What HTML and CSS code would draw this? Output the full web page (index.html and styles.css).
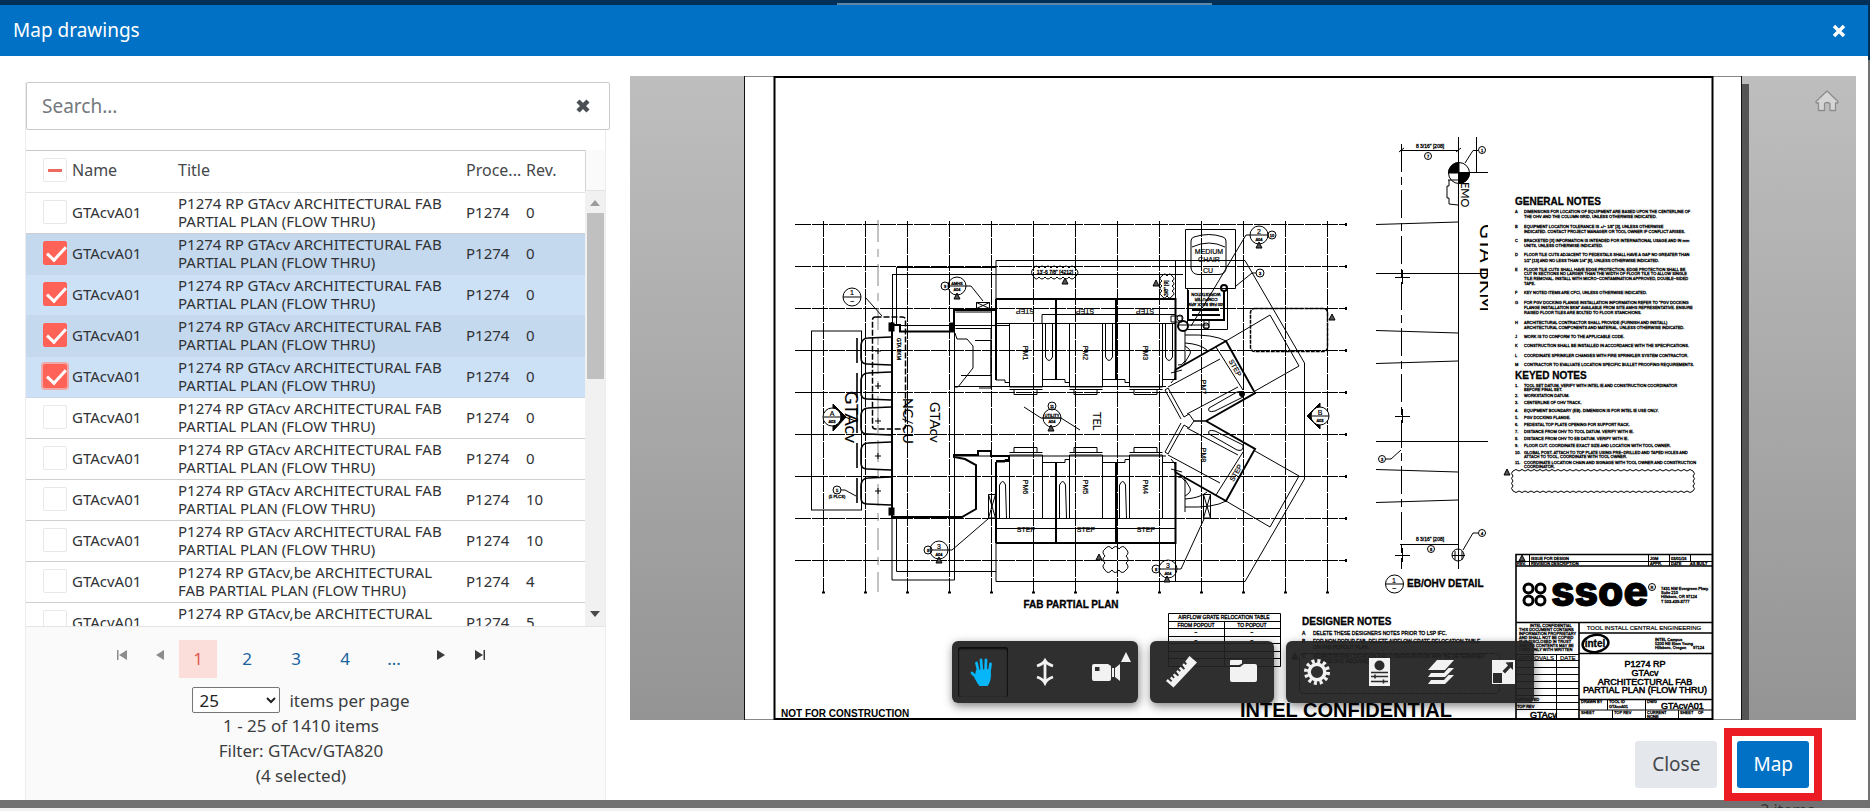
FILE: index.html
```html
<!DOCTYPE html>
<html lang="en">
<head>
<meta charset="utf-8">
<title>Map drawings</title>
<link rel="stylesheet" href="styles.css">
</head>
<body>
<div class="topbar"><div class="topbar-tab"></div></div>
<main class="dialog" role="dialog" aria-labelledby="dialog-title">
  <header class="dialog-header">
    <h1 id="dialog-title" class="dialog-title">Map drawings</h1>
    <button class="icon-button" type="button" aria-label="Close dialog">
      <svg width="14" height="14" viewBox="0 0 14 14"><path d="M2 2 12 12M12 2 2 12" stroke="#fff" stroke-width="3.4"/></svg>
    </button>
  </header>
  <div class="dialog-body">
    <section class="panel">
      <div class="search">
        <input class="search-input" type="text" placeholder="Search..." aria-label="Search">
        <button class="icon-button" type="button" aria-label="Clear search">
          <svg width="16" height="16" viewBox="0 0 16 16"><path d="M3 3 13 13M13 3 3 13" stroke="#4c5054" stroke-width="4.4"/></svg>
        </button>
      </div>
      <div class="grid">
        <div class="grid-view">
          <table class="drawings">
            <thead>
              <tr><th class="col-check"><input class="check mixed" type="checkbox" aria-label="Select all"></th><th class="col-name">Name</th><th class="col-title">Title</th><th class="col-process">Proce...</th><th>Rev.</th></tr>
            </thead>
            <tbody>
              <tr><td><input class="check" type="checkbox" aria-label="Select row 1"></td><td>GTAcvA01</td><td class="title">P1274 RP GTAcv ARCHITECTURAL FAB PARTIAL PLAN (FLOW THRU)</td><td>P1274</td><td>0</td></tr>
              <tr class="selected alt"><td><input class="check" type="checkbox" checked aria-label="Select row 2"></td><td>GTAcvA01</td><td class="title">P1274 RP GTAcv ARCHITECTURAL FAB PARTIAL PLAN (FLOW THRU)</td><td>P1274</td><td>0</td></tr>
              <tr class="selected"><td><input class="check" type="checkbox" checked aria-label="Select row 3"></td><td>GTAcvA01</td><td class="title">P1274 RP GTAcv ARCHITECTURAL FAB PARTIAL PLAN (FLOW THRU)</td><td>P1274</td><td>0</td></tr>
              <tr class="selected alt"><td><input class="check" type="checkbox" checked aria-label="Select row 4"></td><td>GTAcvA01</td><td class="title">P1274 RP GTAcv ARCHITECTURAL FAB PARTIAL PLAN (FLOW THRU)</td><td>P1274</td><td>0</td></tr>
              <tr class="selected"><td><input class="check focused" type="checkbox" checked aria-label="Select row 5"></td><td>GTAcvA01</td><td class="title">P1274 RP GTAcv ARCHITECTURAL FAB PARTIAL PLAN (FLOW THRU)</td><td>P1274</td><td>0</td></tr>
              <tr><td><input class="check" type="checkbox" aria-label="Select row 6"></td><td>GTAcvA01</td><td class="title">P1274 RP GTAcv ARCHITECTURAL FAB PARTIAL PLAN (FLOW THRU)</td><td>P1274</td><td>0</td></tr>
              <tr><td><input class="check" type="checkbox" aria-label="Select row 7"></td><td>GTAcvA01</td><td class="title">P1274 RP GTAcv ARCHITECTURAL FAB PARTIAL PLAN (FLOW THRU)</td><td>P1274</td><td>0</td></tr>
              <tr><td><input class="check" type="checkbox" aria-label="Select row 8"></td><td>GTAcvA01</td><td class="title">P1274 RP GTAcv ARCHITECTURAL FAB PARTIAL PLAN (FLOW THRU)</td><td>P1274</td><td>10</td></tr>
              <tr><td><input class="check" type="checkbox" aria-label="Select row 9"></td><td>GTAcvA01</td><td class="title">P1274 RP GTAcv ARCHITECTURAL FAB PARTIAL PLAN (FLOW THRU)</td><td>P1274</td><td>10</td></tr>
              <tr><td><input class="check" type="checkbox" aria-label="Select row 10"></td><td>GTAcvA01</td><td class="title">P1274 RP GTAcv,be ARCHITECTURAL FAB PARTIAL PLAN (FLOW THRU)</td><td>P1274</td><td>4</td></tr>
              <tr><td><input class="check" type="checkbox" aria-label="Select row 11"></td><td>GTAcvA01</td><td class="title">P1274 RP GTAcv,be ARCHITECTURAL FAB PARTIAL PLAN (FLOW THRU)</td><td>P1274</td><td>5</td></tr>
            </tbody>
          </table>
        </div>
        <div class="scroll">
          <div class="scroll-head"></div>
          <div class="scroll-track">
            <svg class="scroll-arrow" viewBox="0 0 10 6"><path d="M0 6 5 0 10 6Z" fill="#9b9b9b"/></svg>
            <div class="scroll-thumb"></div>
            <svg class="scroll-arrow" viewBox="0 0 10 6"><path d="M0 0H10L5 6Z" fill="#4a4a4a"/></svg>
          </div>
        </div>
      </div>
      <footer class="pager">
        <nav class="pages" aria-label="Pages">
          <button class="page-step" type="button" aria-label="First page"><svg width="10" height="10" viewBox="0 0 10 10" fill="#8c8c8c"><path d="M0 0H1.5V10H0ZM10 0V10L2 5Z"/></svg></button>
          <button class="page-step" type="button" aria-label="Previous page"><svg width="10" height="10" viewBox="0 0 10 10" fill="#8c8c8c"><path d="M8 0V10L0 5Z"/></svg></button>
          <span class="page-list">
            <a class="page current" href="#">1</a>
            <a class="page" href="#">2</a>
            <a class="page" href="#">3</a>
            <a class="page" href="#">4</a>
            <a class="page" href="#">...</a>
          </span>
          <button class="page-step" type="button" aria-label="Next page"><svg width="10" height="10" viewBox="0 0 10 10" fill="#3a3a3a"><path d="M1 0V10L9 5Z"/></svg></button>
          <button class="page-step" type="button" aria-label="Last page"><svg width="10" height="10" viewBox="0 0 10 10" fill="#3a3a3a"><path d="M0 0V10L8 5ZM8.5 0H10V10H8.5Z"/></svg></button>
        </nav>
        <div class="page-size">
          <select id="page-size" class="size-select"><option>25</option><option>50</option></select>
          <label for="page-size">items per page</label>
        </div>
        <p class="info">1 - 25 of 1410 items</p>
        <p class="info">Filter: GTAcv/GTA820</p>
        <p class="info">(4 selected)</p>
      </footer>
    </section>

    <section class="preview">
      <div class="viewer">
        <svg class="sheet" viewBox="630 76 1226 644" aria-label="Fab partial plan drawing">
          <defs>
            <clipPath id="driveClip"><rect x="1470" y="215" width="18" height="110"/></clipPath>
            <g id="pod">
              <path d="M891-14 868-13Q862-13 861-6V7Q861 13 867 13L891 14" stroke-width="1.6"/>
              <path d="M857-13V12" stroke-width="1.6"/><path d="M875 0H881M878-3V3"/>
            </g>
            <g id="tri"><path d="M0-3 3 3H-3Z" fill="#555"/></g>
            <g id="tag"><circle r="9"/><path d="M-9 0H9"/></g>
            <g id="halfUp">
              <path d="M996 299H1175.5V380M996 380V299M1056 299V380M1116 299V380" stroke-width="2"/>
              <path d="M996 323.5H1175.5M996 380H1005V382.500H1009M1042 379.500H1065V382.500H1069M1102 379.500H1125V382.500H1129M1162 379.500H1175"/>
              <path d="M1009.500 323V387H1042.500V323M1069.500 323V387H1102.500V323M1129.500 323V387H1162.500V323M1009.500 389.500H1042.500M1069.500 389.500H1102.500M1129.500 389.500H1162.500"/>
              <path d="M1014 389.500V394.500H1037V389.500M1074 389.500V394.500H1097V389.500M1134 389.500V394.500H1157V389.500"/>
            </g>
            <g id="arm">
              <path d="M1175 370 1226 341 1255 393 1206 421" stroke-width="2"/>
              <path d="M1226 341 1270 315 1299 366 1255 391M1245 260.500 1304.500 363V421M1216 347 1243 390M1168 387 1220 359M1171 373 1182 370M1175 370V378L1171 383M1187 414 1238 387M1209 408 1237 392Q1244 390 1243 397L1215 411Q1207 413 1209 408Z"/>
              <path d="M1165 390 1181 419M1168 388 1184 417M1184 417 1189 414 1194 421H1206M1165 390 1168 388"/>
              <path d="M1185 330V361Q1182 366 1178 365M1185 346Q1192 350 1190 354L1184 364M1185 335Q1214 334 1226 341M1185 343Q1200 344 1207 350"/>
            </g>
          </defs>

          <rect x="744.5" y="76" width="997" height="644" fill="#fff" stroke="#111"/>
          <rect x="1742" y="84" width="7" height="636" fill="#555"/>
          <rect x="774.500" y="77" width="938" height="642" fill="none" stroke="#000" stroke-width="2"/>

          <g class="lines">
            <path stroke-dasharray="16 1" d="M823.500 221V592M865.500 221V592M907.500 221V592M949.500 221V592M991.500 221V592M1033.500 221V592M1075.500 221V592M1117.500 221V592M1159.500 221V592M1201.500 221V592M1243.500 221V592M1285.500 221V592M1327.500 221V592"/>
            <path stroke-dasharray="16 1" d="M795 224.500H1346M795 266.500H1346M795 308.500H1346M795 350.500H1346M795 392.500H1346M795 434.500H1346M795 476.500H1346M795 518.500H1346M795 560.500H1346"/>
            <path stroke-width="2" stroke-dasharray="3 39" d="M822 592.500H1330"/>
            <path stroke-width="2" stroke-dasharray="3 39" d="M1346 223V563"/>
            <path stroke="#888" stroke-dasharray="22 7 8 7" d="M878 220V592"/>

            <rect x="811.500" y="331" width="50" height="179"/>
            <use href="#pod" y="351"/><use href="#pod" y="386"/><use href="#pod" y="421"/><use href="#pod" y="456"/><use href="#pod" y="491"/>
            <rect x="872.500" y="317" width="33" height="112" rx="3" stroke-width="1.500" stroke-dasharray="6 2"/>
            <path stroke-width="2" d="M892 322V517H962L976 509V465L965 459 954 457V455H978V451H991V456H1009V461H997V462M892 325H900V331.500H954V310H996"/>
            <path d="M892 517V580H954.500V325M896.500 325V267.500H996M896.500 517V571.500H996M892 274.500H1183M892.500 274V325M892 325.500H1009M954 386.500H1166M954 456H1166"/>
            <path d="M996 299V260.500H1245M996 543V581.500H1245M1175.500 260V299M1175.500 543V581"/>
            <path d="M955.500 312H991.500V328.500H955.500M955 333 957 339H967L973 346V368L958 387H954M975 340.500H991V375.500H961M991 328V388H979"/>
            <path d="M1042 323V314.500H1175M996 528.500H1175"/>
            <path d="M1045.500 323V357Q1049 364 1052.500 357V323M1105.500 323V357Q1109 364 1112.500 357V323M1165.500 323V357Q1169 364 1172.500 357V323"/>
            <path d="M999.500 518V485Q1003 478 1005.500 485L1006.500 518M1059.500 518V485Q1063 478 1065.500 485L1066.500 518M1119.500 518V485Q1123 478 1125.500 485L1126.500 518"/>
            <rect x="889" y="323" width="5" height="8" fill="#000"/><rect x="889" y="508" width="5" height="7" fill="#000"/><rect x="950" y="323" width="4" height="8" fill="#000"/>
            <use href="#halfUp"/><use href="#halfUp" transform="matrix(1 0 0 -1 0 842)"/>
            <use href="#arm"/><use href="#arm" transform="matrix(1 0 0 -1 0 842)"/>

            <use href="#tag" x="852" y="297"/><path d="M865 297 882 316"/>
            <path d="M833 404 846 417 833 431ZM1320 403 1307 416 1320 429Z" fill="#000"/>
            <circle cx="832" cy="417" r="9" fill="#fff"/><path d="M823 417H841M845 417 858 422"/>
            <circle cx="1320" cy="416" r="9" fill="#fff"/><path d="M1311 416H1329"/>
            <use href="#tag" x="957" y="286"/><circle cx="945" cy="286" r="4"/><path d="M966 286H971L983 301M976.500 302.500H989.500V308.500H976.500ZM976.500 302.500 989.500 308.500M989.500 302.500 976.500 308.500"/><use href="#tri" x="957" y="296"/>
            <use href="#tag" x="1052" y="418"/><circle cx="1052" cy="406" r="4"/><path d="M1024 407 1041 418H1061L1080 430"/><use href="#tri" x="1051" y="428"/>
            <use href="#tag" x="939" y="550"/><circle cx="928" cy="550" r="4"/><path d="M948 550H952L988 519M988.500 494.500H995.500V518H988.500ZM988.500 494.500 995.500 518M995.500 494.500 988.500 518"/><use href="#tri" x="939" y="560"/>
            <use href="#tag" x="1168" y="569"/><circle cx="1156" cy="569" r="4"/><path d="M1177 569H1181L1204 519M1203.500 494.500H1210.500V518H1203.500ZM1203.500 494.500 1210.500 518M1210.500 494.500 1203.500 518"/><use href="#tri" x="1167" y="579"/>
            <use href="#tag" x="1259" y="235"/><circle cx="1272" cy="235" r="4"/><path d="M1250 235H1246L1212 292 1191 326"/><use href="#tri" x="1259" y="245"/>
            <circle cx="1260" cy="273" r="4"/><path d="M1256 273H1252L1236 286"/>
            <circle cx="837" cy="490" r="4"/><path d="M841 490H845L856 496"/>
            <path d="M1034 268q2-4 5 0q3-4 6 0q3-4 6 0q3-4 6 0q3-4 6 0q3-4 6 0q3-4 6 0q6 5 0 9q-3 4-6 0q-3 4-6 0q-3 4-6 0q-3 4-6 0q-3 4-6 0q-3 4-6 0q-3 4-5 0q-5-5 0-9"/><use href="#tri" x="1065" y="281"/>
            <path d="M1162 276q3-4 5 0q3-4 5 0q4 3 0 5q4 3 0 5q4 3 0 5q4 3 0 5q-2 4-5 0q-3 4-5 0q-4-3 0-5q-4-3 0-5q-4-3 0-5q-4-3 0-5"/><use href="#tri" x="1156" y="283"/>
            <path d="M1105 549q4-5 7 0q4-5 7 0q4-5 7 0q4 4 0 7q4 4 0 7q4 4 0 7q-4 5-7 0q-4 5-7 0q-4 5-7 0q-4-4 0-7q-4-4 0-7q-4-4 0-7"/><use href="#tri" x="1099" y="557"/>
            <rect x="1250.500" y="308.500" width="77" height="43" rx="4" stroke-width="1.500" stroke-dasharray="4 1"/><use href="#tri" x="1332" y="317"/>

            <path d="M1185.500 229.500H1235.500V288.500H1185.500ZM1187.500 288.500H1227.500V329.500H1187.500Z"/>
            <path d="M1191 241Q1191 238 1194 237 1209 232 1223 237 1226 238 1226 241V268Q1226 274 1219 274.500H1198Q1192 274 1191 268ZM1192 247Q1209 239 1225 247"/>
            <path stroke-width="2" d="M1188 290V320H1224V290M1192 315H1220M1192 310H1219"/>
            <path d="M1171 316H1182V322H1171ZM1204 320V328H1209V320M1178 325H1208"/>
            <circle cx="1183" cy="326" r="5" stroke-width="2"/><circle cx="1180" cy="318" r="3"/><circle cx="1224" cy="288" r="3" stroke-width="2"/><circle cx="1206" cy="326" r="3"/><circle cx="1242" cy="394" r="2.500" fill="#000"/>

            <path stroke-dasharray="28 5 8 5" d="M1401.500 144V569"/>
            <path d="M1458.500 137V569M1476.500 137V172M1458 172.500H1488M1400 150.500H1459M1399 152 1404 148M1456 152 1461 148M1478 150.500H1473L1465 163M1376 224.500 1458 222M1376 273.500H1488M1395 277.500H1410M1402.500 270V284M1376 330.500 1458 333M1376 363.500 1458 361M1376 441.500H1488M1395 416.500H1410M1402.500 409V423M1386 459H1391L1401 450M1376 469.500 1458 472M1376 502.500 1458 500M1400 544.500H1459M1395 555.500H1410M1402.500 548V562M1478 533H1473L1463 550M1452 555.500H1465M1455 551V560M1462 551V560M1448 180H1458M1449 180V186H1447V198H1449V204L1458 205"/>
            <circle cx="1428" cy="156" r="3.500"/><circle cx="1482" cy="150" r="3.500"/><circle cx="1382" cy="459" r="3.500"/><circle cx="1431" cy="549" r="3.500"/><circle cx="1482" cy="533" r="3.500"/><circle cx="1458" cy="555" r="6"/>
            <circle cx="1459" cy="173" r="10.500"/><path fill="#000" d="M1459 173H1448.500A10.500 10.500 0 0 1 1459 162.500ZM1459 173H1469.500A10.500 10.500 0 0 1 1459 183.500Z"/>
            <use href="#tag" x="1394.500" y="584"/>

            <path d="M1513 471q3-3 6 0q3-3 6 0q3-3 6 0q3-3 6 0q3-3 6 0q3-3 6 0q3-3 6 0q3-3 6 0q3-3 6 0q3-3 6 0q3-3 6 0q3-3 6 0q3-3 6 0q3-3 6 0q3-3 6 0q3-3 6 0q3-3 6 0q3-3 6 0q3-3 6 0q3-3 6 0q3-3 6 0q3-3 6 0q3-3 6 0q3-3 6 0q3-3 6 0q3-3 6 0q3-3 6 0q3-3 6 0q3-3 6 0q3-3 6 0q3 3 0 5q3 3 0 5q3 3 0 5q3 3 0 5q-3 3-6 0q-3 3-6 0q-3 3-6 0q-3 3-6 0q-3 3-6 0q-3 3-6 0q-3 3-6 0q-3 3-6 0q-3 3-6 0q-3 3-6 0q-3 3-6 0q-3 3-6 0q-3 3-6 0q-3 3-6 0q-3 3-6 0q-3 3-6 0q-3 3-6 0q-3 3-6 0q-3 3-6 0q-3 3-6 0q-3 3-6 0q-3 3-6 0q-3 3-6 0q-3 3-6 0q-3 3-6 0q-3 3-6 0q-3 3-6 0q-3 3-6 0q-3 3-6 0q-3 3-6 0q-3-3 0-5q-3-3 0-5q-3-3 0-5q-3-3 0-5"/><use href="#tri" x="1507" y="472"/>

            <path stroke-width="1.600" d="M1516 719V554.500H1712M1516 566H1712M1516 622.500H1712M1579 622V719M1579 633H1712M1579 653.500H1712M1579 699.500H1712"/>
            <path d="M1516 561.500H1712M1529.500 554V566M1648.500 554V566M1669.500 554V566M1690.500 554V561M1579 710H1712M1516 654.500H1579M1556.500 654V719M1516 660.500H1579M1516 667.500H1579M1516 674.500H1579M1516 681.500H1579M1516 688.500H1579M1516 695.500H1579M1516 702.500H1579M1516 709.500H1579M1645.500 699V719M1607.500 699V710M1612.500 710V719M1678.500 710V719"/>
            <g stroke-width="3"><circle cx="1528.500" cy="588.500" r="4.500"/><circle cx="1540.500" cy="588.500" r="4.500"/><circle cx="1528.500" cy="600.500" r="4.500"/><circle cx="1540.500" cy="600.500" r="4.500"/></g>
            <ellipse cx="1595.500" cy="643.500" rx="13" ry="8.500" stroke-width="2.500" transform="rotate(-8 1595.500 643.500)"/>
            <circle cx="1652" cy="587" r="3.500"/><use href="#tri" x="1522" y="558"/>
            <path d="M1168.500 613.500H1280.500V666.500H1168.500ZM1168.500 621.500H1280.500M1168.500 628.500H1280.500M1168.500 636.500H1280.500M1168.500 643.500H1280.500M1168.500 651.500H1280.500M1168.500 658.500H1280.500M1224.500 621V666"/>
            <rect x="1299.500" y="653.500" width="200" height="40" rx="4" stroke-dasharray="5 1"/><use href="#tri" x="1295" y="656"/>
          </g>

          <g class="cad small">
            <text x="1524" y="213">DIMENSIONS FOR LOCATION OF EQUIPMENT ARE BASED UPON THE CENTERLINE OF</text>
            <text x="1524" y="218">THE OHV AND THE COLUMN GRID, UNLESS OTHERWISE INDICATED.</text>
            <text x="1524" y="228">EQUIPMENT LOCATION TOLERANCE IS +/− 1/8" [3], UNLESS OTHERWISE</text>
            <text x="1524" y="233">INDICATED. CONTACT PROJECT MANAGER OR TOOL OWNER IF CONFLICT ARISES.</text>
            <text x="1524" y="242">BRACKETED [X] INFORMATION IS INTENDED FOR INTERNATIONAL USAGE AND IN mm</text>
            <text x="1524" y="247">UNITS, UNLESS OTHERWISE INDICATED.</text>
            <text x="1524" y="256">FLOOR TILE CUTS ADJACENT TO PEDESTALS SHALL HAVE A GAP NO GREATER THAN</text>
            <text x="1524" y="262">1/2" [13] AND NO LESS THAN 1/4" [6], UNLESS OTHERWISE INDICATED.</text>
            <text x="1524" y="271">FLOOR TILE CUTS SHALL HAVE EDGE PROTECTION. EDGE PROTECTION SHALL BE</text>
            <text x="1524" y="275">CUT IN SECTIONS NO LARGER THAN THE WIDTH OF FLOOR TILE TO ALLOW SINGLE</text>
            <text x="1524" y="280">TILE REMOVAL. INSTALL WITH MICRO−CONTAMINATION APPROVED, DOUBLE−SIDED</text>
            <text x="1524" y="285">TAPE.</text>
            <text x="1524" y="294">KEY NOTED ITEMS ARE CFCI, UNLESS OTHERWISE INDICATED.</text>
            <text x="1524" y="304">FOR PGV DOCKING FLANGE INSTALLATION INFORMATION REFER TO "PGV DOCKING</text>
            <text x="1524" y="309">FLANGE INSTALLATION BKM" AVAILABLE FROM SITE AMHS REPRESENTATIVE. ENSURE</text>
            <text x="1524" y="314">RAISED FLOOR TILES ARE BOLTED TO FLOOR STANCHIONS.</text>
            <text x="1524" y="324">ARCHITECTURAL CONTRACTOR SHALL PROVIDE (FURNISH AND INSTALL)</text>
            <text x="1524" y="329">ARCHITECTURAL COMPONENTS AND MATERIAL, UNLESS OTHERWISE INDICATED.</text>
            <text x="1524" y="338">WORK IS TO CONFORM TO THE APPLICABLE CODE.</text>
            <text x="1524" y="347">CONSTRUCTION SHALL BE INSTALLED IN ACCORDANCE WITH THE SPECIFICATIONS.</text>
            <text x="1524" y="357">COORDINATE SPRINKLER CHANGES WITH FIRE SPRINKLER SYSTEM CONTRACTOR.</text>
            <text x="1524" y="366">CONTRACTOR TO EVALUATE LOCATION SPECIFIC BULLET PROOFING REQUIREMENTS.</text>
            <text x="1515" y="213">A</text><text x="1515" y="228">B</text><text x="1515" y="242">C</text><text x="1515" y="256">D</text><text x="1515" y="271">E</text><text x="1515" y="294">F</text><text x="1515" y="304">G</text><text x="1515" y="324">H</text><text x="1515" y="338">J</text><text x="1515" y="347">K</text><text x="1515" y="357">L</text><text x="1515" y="366">M</text>
            <text x="1524" y="387">TOOL SET DATUM. VERIFY WITH INTEL IE AND CONSTRUCTION COORDINATOR</text>
            <text x="1524" y="391">BEFORE FINAL SET.</text>
            <text x="1524" y="397">WORKSTATION DATUM.</text>
            <text x="1524" y="404">CENTERLINE OF OHV TRACK.</text>
            <text x="1524" y="412">EQUIPMENT BOUNDARY (EB). DIMENSION IS FOR INTEL IE USE ONLY.</text>
            <text x="1524" y="419">PGV DOCKING FLANGE.</text>
            <text x="1524" y="426">PEDESTAL TOP PLATE OPENING FOR SUPPORT RACK.</text>
            <text x="1524" y="433">DISTANCE FROM OHV TO TOOL DATUM. VERIFY WITH IE.</text>
            <text x="1524" y="440">DISTANCE FROM OHV TO EB DATUM. VERIFY WITH IE.</text>
            <text x="1524" y="447">FLOOR CUT. COORDINATE EXACT SIZE AND LOCATION WITH TOOL OWNER.</text>
            <text x="1524" y="454">GLOBAL POST. ATTACH TO TOP PLATE USING PRE−DRILLED AND TAPED HOLES AND</text>
            <text x="1524" y="458">ATTACH TO TOOL, COORDINATE WITH TOOL OWNER.</text>
            <text x="1524" y="464">COORDINATE LOCATION CHAIN AND SIGNAGE WITH TOOL OWNER AND CONSTRUCTION</text>
            <text x="1524" y="468">COORDINATOR.</text>
            <text x="1515" y="387">1.</text><text x="1515" y="397">2.</text><text x="1515" y="404">3.</text><text x="1515" y="412">4.</text><text x="1515" y="419">5.</text><text x="1515" y="426">6.</text><text x="1515" y="433">7.</text><text x="1515" y="440">8.</text><text x="1515" y="447">9.</text><text x="1515" y="454">10.</text><text x="1515" y="464">11.</text>
            <text x="1531" y="560">ISSUE FOR DESIGN</text><text x="1650" y="560">JGM</text><text x="1671" y="560">03/01/16</text>
            <text x="1517" y="565">REV.</text><text x="1531" y="565">REVISION DESCRIPTION</text><text x="1650" y="565">APPR.</text><text x="1671" y="565">DATE</text><text x="1690" y="565">AS BUILT</text>
            <text x="1661" y="590">7431 NW Evergreen Pkwy.</text><text x="1661" y="594">Suite 210</text><text x="1661" y="598">Hillsboro, OR 97124</text><text x="1661" y="603">T 503-439-8777</text>
            <text x="1530" y="627">INTEL CONFIDENTIAL</text><text x="1519" y="631">THIS DOCUMENT CONTAINS</text><text x="1519" y="635">INFORMATION PROPRIETARY</text><text x="1519" y="639">AND SHALL NOT BE COPIED</text><text x="1519" y="643">IT IS DISCLOSED IN TRUST</text><text x="1519" y="647">AND ITS CONTENTS MAY BE</text><text x="1519" y="651">USED ONLY WITH WRITTEN</text>
            <text x="1655" y="641">INTEL Campus</text><text x="1655" y="645">5200 NE Elam Young</text><text x="1655" y="649">Hillsboro, Oregon</text><text x="1693" y="649">97124</text>
            <text x="1581" y="703">DRAWN BY</text><text x="1609" y="703">TOOL ID</text><text x="1609" y="708">GTAcvA01</text><text x="1647" y="703">DWG</text><text x="1581" y="714">SHEET</text><text x="1614" y="714">TOP REV</text><text x="1647" y="714">CURRENT</text><text x="1680" y="714">SHEET</text><text x="1698" y="714">OF</text><text x="1647" y="718">NONE</text><text x="1517" y="701">APPROVED</text><text x="1517" y="708">TOP REV</text>
            <text x="837" y="498" class="mid">(5 PLCS)</text>
            <text x="957" y="285" class="mid">AMHS</text><text x="957" y="291" class="mid">A04</text><text x="1052" y="417" class="mid">UTILITY</text><text x="1052" y="423" class="mid">A04</text><text x="939" y="556" class="mid">A04</text><text x="1168" y="575" class="mid">A04</text><text x="1259" y="241" class="mid">A04</text><text x="832" y="423" class="mid">A03</text><text x="1320" y="422" class="mid">A03</text>
            <text x="945" y="288" class="mid">9</text><text x="928" y="552" class="mid">8</text><text x="1156" y="571" class="mid">8</text><text x="1272" y="237" class="mid">10</text><text x="1260" y="275" class="mid">3</text><text x="837" y="492" class="mid">5</text><text x="1052" y="408" class="mid">11</text>
            <text x="1428" y="158" class="mid">7</text><text x="1482" y="152" class="mid">1</text><text x="1382" y="461" class="mid">3</text><text x="1431" y="551" class="mid">8</text><text x="1482" y="535" class="mid">4</text><text x="1652" y="589" class="mid">R</text>
            <text transform="translate(1206 293) rotate(180)" class="mid">WORKSTATION</text><text transform="translate(1206 298) rotate(180)" class="mid">COMPUTER</text><text transform="translate(1206 303) rotate(180)" class="mid">500 FAB BACK ARM</text>
          </g>
          <g class="cad small wide">
            <text x="1224" y="619" class="mid">AIRFLOW GRATE RELOCATION TABLE</text><text x="1196" y="627" class="mid">FROM POPOUT</text><text x="1252" y="627" class="mid">TO POPOUT</text>
            <text x="1196" y="634" class="mid">−</text><text x="1252" y="634" class="mid">−</text><text x="1196" y="642" class="mid">−</text><text x="1252" y="642" class="mid">−</text>
            <text x="1302" y="635">A</text><text x="1313" y="635">DELETE THESE DESIGNERS NOTES PRIOR TO LSP IFC.</text>
            <text x="1302" y="643">B</text><text x="1313" y="643">FOR NON POPUP FAB, DELETE AIRFLOW GRATE RELOCATION TABLE</text><text x="1313" y="649">ON FAB POPOUT PLAN.</text>
            <text x="1302" y="658">C</text><text x="1313" y="658">WORKSTATION LOCATION AND CONFIGURATION MAY BE DETERMINED</text><text x="1313" y="663">BY SPECIFIC REQUIREMENT.</text>
            <text x="1055" y="274" class="mid">13'-6 7/8" [4212]</text><text transform="translate(1168 296) rotate(-90)">3/8" [9]</text>
            <text x="1430" y="148" class="mid">8 3/16" [208]</text><text x="1430" y="541" class="mid">8 3/16" [208]</text>
            <text transform="translate(897 338) rotate(90)">GTA BKM</text>
          </g>

          <g class="cad label">
            <text transform="translate(1025 309) rotate(180)" class="mid">STEP</text><text transform="translate(1085 309) rotate(180)" class="mid">STEP</text><text transform="translate(1145 309) rotate(180)" class="mid">STEP</text>
            <text x="1026" y="532" class="mid">STEP</text><text x="1086" y="532" class="mid">STEP</text><text x="1146" y="532" class="mid">STEP</text>
            <text transform="translate(1233 369) rotate(61)" class="mid">STEP</text><text transform="translate(1238 474) rotate(-60)" class="mid">STEP</text>
            <text transform="translate(1023 353) rotate(90)" class="mid">PM1</text><text transform="translate(1083 353) rotate(90)" class="mid">PM2</text><text transform="translate(1143 353) rotate(90)" class="mid">PM3</text>
            <text transform="translate(1023 487) rotate(90)" class="mid">PM6</text><text transform="translate(1083 487) rotate(90)" class="mid">PM5</text><text transform="translate(1143 487) rotate(90)" class="mid">PM4</text>
            <text transform="translate(1201 387) rotate(90)" class="mid">PM7</text><text transform="translate(1201 455) rotate(90)" class="mid">PM8</text>
            <text x="1209" y="254" class="mid">MEDIUM</text><text x="1209" y="262" class="mid">CHAIR</text><text x="1208" y="273" class="mid">CU</text>
            <text x="852" y="295" class="mid">1</text><text x="852" y="304" class="mid">−</text><text x="1394" y="583" class="mid">1</text><text x="1394" y="591" class="mid">−</text>
            <text x="832" y="416" class="mid">A</text><text x="1320" y="415" class="mid">B</text><text x="939" y="549" class="mid">3</text><text x="1168" y="568" class="mid">3</text><text x="1259" y="234" class="mid">2</text>
          </g>
          <g class="cad fine"><text x="1644" y="630" class="mid">TOOL INSTALL CENTRAL ENGINEERING</text><text x="1518" y="660">APPROVALS</text><text x="1560" y="660">DATE</text></g>
          <g class="cad outline">
            <text class="s18" transform="translate(845 391) rotate(90)">GTAcv</text>
            <text class="s14" transform="translate(903 398) rotate(90)">NC/CU</text>
            <text class="s14" transform="translate(930 402) rotate(90)">GTAcv</text>
            <text class="s11" transform="translate(1093 412) rotate(90)">TEL</text>
            <text class="s11" transform="translate(1461 182) rotate(90)">EMO</text>
            <g clip-path="url(#driveClip)"><text class="s20" transform="translate(1480 224) rotate(90)">GTA BKM</text></g>
          </g>
          <g class="cad head">
            <text x="1515" y="205">GENERAL NOTES</text><text x="1515" y="379">KEYED NOTES</text>
            <text x="1407" y="587">EB/OHV DETAIL</text><text x="1071" y="608" class="mid">FAB PARTIAL PLAN</text>
            <text x="1302" y="625">DESIGNER NOTES</text>
          </g>
          <g class="cad sub">
            <text x="781" y="717">NOT FOR CONSTRUCTION</text>
          </g>
          <g class="cad block">
            <text x="1645" y="667" class="mid">P1274 RP</text><text x="1645" y="676" class="mid">GTAcv</text><text x="1645" y="685" class="mid">ARCHITECTURAL FAB</text><text x="1645" y="693" class="mid">PARTIAL PLAN (FLOW THRU)</text><text x="1661" y="709">GTAcvA01</text><text x="1530" y="718">GTAcv</text>
          </g>
          <text class="cad confidential" x="1240" y="717">INTEL CONFIDENTIAL</text>
          <text class="cad intel" x="1595" y="647">intel</text>
          <text class="cad logo" x="1551" y="606">ssoe</text>
        </svg>

        <button class="home" type="button" aria-label="Home view">
          <svg width="26" height="24" viewBox="0 0 26 24"><path d="M13 2 24 12.500Q24.500 14 22 14H21.500V21.500H16V14.500Q13 12.500 10.500 14.500V21.500H4.500V14H4Q1.500 14 2 12.500Z" fill="#d6d6d6" stroke="#8d8d8d" stroke-width="1.300" stroke-linejoin="round"/></svg>
        </button>

        <div class="toolbar">
          <div class="tools">
            <button class="tool active" type="button" aria-label="Pan"><svg viewBox="0 0 32 32"><g stroke="#06b6f8" stroke-linecap="round" fill="none" stroke-width="2.800"><path d="M9.500 7 12 18M14 4 15 17M19 4 18.500 17M23.500 8 22 18M5 17 10 22"/></g><path d="M9 14 22.500 13 24 18Q24 26 20.500 30H12.500Q10 27 7.500 22Z" fill="#06b6f8"/></svg></button>
            <button class="tool" type="button" aria-label="Zoom"><svg viewBox="0 0 32 32"><path d="M16 5V27M8 10Q14 8 16 4.500 18 8 24 10M8 21Q14 23 16 27 18 23 24 21" fill="none" stroke="#f2f2f2" stroke-width="2.800"/></svg></button>
            <button class="tool" type="button" aria-label="Camera"><svg viewBox="0 0 32 32"><path fill="#f2f2f2" fill-rule="evenodd" d="M1 10Q1 8 3 8H17L20 10V23Q20 25 18 25H3Q1 25 1 23ZM4 11V15H8.500V11ZM21 12H23V21H21ZM24 12 29 8V25L24 21Z"/></svg><span class="caret"></span></button>
          </div>
          <div class="tools">
            <button class="tool" type="button" aria-label="Measure"><svg viewBox="0 0 32 32"><path fill="#f2f2f2" d="M24.500 0 32 6.500 8.500 31.500 1 25 2.800 23 6 26 7.200 24.700 5 22.200 6.500 20.500 8.500 22.500 9.700 21.200 7.900 19 9.400 17.400 12.800 20.300 14 19 11.200 15.500 12.700 13.900 14.700 15.700 15.900 14.400 14 12.400 15.500 10.700 18.800 13.800 20 12.500 17.300 9 18.800 7.200 20.700 9 21.900 7.700 20.200 5.500Z"/></svg></button>
            <button class="tool" type="button" aria-label="Documents"><svg viewBox="0 0 32 32"><path fill="#f2f2f2" d="M3 5Q3 4 4 4H15V7.500L12 9H3ZM3 11H13L17 8H28Q30 8 30 10V24Q30 26 28 26H5Q3 26 3 24Z"/></svg></button>
          </div>
          <div class="tools">
            <button class="tool" type="button" aria-label="Settings"><svg viewBox="0 0 32 32"><circle cx="16" cy="16" r="11" fill="none" stroke="#f2f2f2" stroke-width="4" stroke-dasharray="3 2.760"/><circle cx="16" cy="16" r="7.800" fill="none" stroke="#f2f2f2" stroke-width="3.400"/></svg></button>
            <button class="tool" type="button" aria-label="Properties"><svg viewBox="0 0 32 32"><path fill="#f2f2f2" d="M6 2H27V30H6Z"/><circle cx="16.500" cy="9.500" r="5" fill="#2b2b2b"/><path fill="none" stroke="#2b2b2b" stroke-width="1.600" d="M8 20.500H25M8 25.500H25M8 16.500H25M12 18.500V22.500M20.500 23.500V27.500" /></svg></button>
            <button class="tool" type="button" aria-label="Layers"><svg viewBox="0 0 32 32"><path fill="#f2f2f2" d="M12 4H29L20 14H3ZM19 17 23.500 12H29L20 21H3L6 17ZM19 24 23.500 19H29L20 28H3L6 24Z"/></svg></button>
            <button class="tool" type="button" aria-label="Full screen"><svg viewBox="0 0 32 32"><path fill="#f2f2f2" d="M5 4H28V28H5Z"/><path fill="#2b2b2b" d="M6 17H15V27H6ZM26 6V14L23.500 11.500 18 17.500 15.500 15 21 9.500 18.500 6.500Z"/></svg></button>
          </div>
        </div>
      </div>
      <footer class="actions">
        <button class="btn" type="button">Close</button>
        <span class="callout"><button class="btn primary" type="button">Map</button></span>
      </footer>
    </section>
  </div>
</main>
<div class="underlay"><span class="underlay-count">2 items</span></div>
</body>
</html>
```

FILE: styles.css
```css
* { box-sizing: border-box; }

body {
  margin: 0;
  height: 100vh;
  display: flex;
  flex-direction: column;
  background: linear-gradient(#003058 60px, #717171 60px);
  color: #3a3d40;
  font: 16px/25px "Noto Sans", "Open Sans", sans-serif;
}

button { font: inherit; cursor: pointer; }

.topbar { flex: none; height: 5px; background: #003058; padding: 3px 0 0 837px; }
.topbar-tab { width: 375px; max-width: 50%; height: 2px; background: #5f87a8; }

.dialog {
  position: relative;
  z-index: 1;
  flex: 1;
  min-height: 0;
  margin-right: 2px;
  display: flex;
  flex-direction: column;
  background: #fff;
}

.dialog-header {
  flex: none;
  height: 51px;
  padding: 0 22px 0 13px;
  display: flex;
  align-items: center;
  justify-content: space-between;
  background: #0071c5;
}
.dialog-title { margin: 0; color: #fff; font-size: 19px; font-weight: 400; }
.icon-button { display: flex; padding: 0; border: 0; background: none; }

.dialog-body {
  flex: 1;
  min-height: 0;
  display: grid;
  grid-template-columns: 581px minmax(0, 1fr);
  gap: 24px;
  padding: 20px 12px 0 25px;
}

/* Drawing list */
.panel { display: flex; flex-direction: column; min-height: 0; margin-top: 6px; border: solid #ececec; border-width: 0 1px; }
.search {
  flex: none;
  display: flex;
  align-items: center;
  width: 584px;
  height: 48px;
  margin-bottom: 20px;
  padding: 0 18px 0 15px;
  border: 1px solid #c8cacc;
  border-radius: 2px;
  background: #fff;
}
.search-input { flex: 1; min-width: 0; padding: 0; border: 0; outline: 0; background: none; color: #444; font: 19px "Noto Sans", sans-serif; }
.search-input::placeholder { color: #74787c; opacity: 1; }

.grid { flex: 1; min-height: 0; display: flex; }
.grid-view { flex: 1; min-width: 0; overflow: hidden; border-top: 1px solid #c9c9c9; }
.drawings { width: 100%; table-layout: fixed; border-collapse: collapse; }
.drawings th, .drawings td { height: 41px; padding: 0 0 2px; border-bottom: 1px solid #cfcfcf; text-align: left; vertical-align: middle; line-height: 18px; white-space: nowrap; }
.drawings th { font-size: 16px; font-weight: 400; color: #45484b; border-bottom-color: #e2e2e2; }
.drawings td { font-size: 15px; color: #303336; }
.drawings td.title { white-space: normal; padding-right: 18px; }
.col-check { width: 46px; }
.col-name { width: 106px; }
.col-title { width: 288px; }
.col-process { width: 60px; }
.drawings .selected { background: #cce0f6; }
.drawings .selected.alt { background: #c4d8ee; }
.drawings .selected td { border-bottom-color: #c9d8e8; }

.check {
  display: block;
  appearance: none;
  width: 24px;
  height: 24px;
  margin: 0 0 0 17px;
  padding: 4px 0 0 3px;
  border: 1px solid #e8e8e8;
  border-radius: 2px;
  background: #fff;
}
.check:checked { background: #ff6358; border-color: #ff6358; }
.check:checked::before { content: ""; display: block; width: 16px; height: 8px; border: solid #fff; border-width: 0 0 3px 3px; transform: rotate(-47deg); }
.check.mixed { padding: 10px 0 0 4px; }
.check.mixed::before { content: ""; display: block; width: 14px; height: 3px; background: #ec6a5e; }
.check.focused { box-shadow: 0 0 0 2px #f0a9a8; }

.scroll { flex: none; width: 20px; display: flex; flex-direction: column; }
.scroll-head { height: 41px; background: #fafafa; border-bottom: 1px solid #e2e2e2; border-left: 1px solid #d4d4d4; }
.scroll-track { flex: 1; display: flex; flex-direction: column; align-items: center; padding: 9px 0; background: #f1f1f1; }
.scroll-arrow { width: 10px; height: 6px; }
.scroll-thumb { width: 17px; height: 166px; margin: 7px 0 auto; background: #c0c0c0; }

/* Pager */
.pager { flex: none; padding: 13px 29px 12px 0; border-top: 1px solid #e4e4e4; background: #fafafa; text-align: center; font-size: 17px; }
.pages { display: flex; align-items: center; justify-content: center; gap: 11px; margin-bottom: 9px; }
.page-list { display: flex; gap: 11px; margin-left: -7px; margin-right: 3px; }
.page { width: 38px; height: 38px; line-height: 38px; color: #17629f; text-decoration: none; }
.page.current { background: #fbded9; color: #e2574f; }
.page-step { display: flex; width: 28px; justify-content: center; padding: 0 0 8px; border: 0; background: none; }
.page-size { display: flex; align-items: center; justify-content: center; gap: 9px; }
.size-select { width: 88px; height: 26px; padding: 0 2px; border: 1px solid #767676; border-radius: 2px; background: #fff; color: #222; font: 17px "Noto Sans", sans-serif; }
.info { margin: 0; }

/* Viewer */
.preview { display: flex; flex-direction: column; min-height: 0; }
.viewer { position: relative; flex: 1; min-height: 0; background: linear-gradient(#bebebe, #949494); }
.sheet { display: block; width: 100%; height: 100%; }
.lines { fill: none; stroke: #000; stroke-width: 1; }
.cad { font-family: "Liberation Sans", Arial, sans-serif; fill: #000; stroke: #000; stroke-width: .3px; }
.mid { text-anchor: middle; }
.small { font-size: 4px; }
.wide { font-size: 5px; }
.fine { font-size: 6px; stroke-width: .2px; }
.label { font-size: 7px; stroke-width: .2px; }
.outline { font-family: Lato, "Liberation Sans", sans-serif; font-weight: 400; stroke-width: .1px; }
.s11 { font-size: 11px; }
.s14 { font-size: 14px; }
.s18 { font-size: 18px; }
.s20 { font-size: 20px; }
.head { font-size: 10px; font-weight: 700; }
.sub { font-size: 10px; font-weight: 700; stroke: none; }
.block { font-size: 9px; stroke-width: .5px; }
.confidential { font-size: 20px; font-weight: 700; stroke: none; }
.intel { font-size: 10px; font-weight: 700; text-anchor: middle; }
.logo { font-family: Inter, "Liberation Sans", sans-serif; font-size: 41px; font-weight: 800; stroke-width: 1px; }

.home { position: absolute; top: 13px; right: 16px; display: flex; padding: 0; border: 0; background: none; }

.toolbar { position: absolute; left: 0; right: 0; bottom: 17px; display: flex; justify-content: center; gap: 12px; }
.tools { display: flex; border-radius: 6px; background: rgba(34, 34, 34, .94); box-shadow: 1px 3px 10px rgba(0, 0, 0, .5); }
.tool { position: relative; display: flex; align-items: center; justify-content: center; width: 62px; height: 62px; padding: 0; border: 0; background: none; }
.tool svg { width: 32px; height: 32px; }
.tool.active::before { content: ""; position: absolute; inset: 6px; border-radius: 3px; box-shadow: inset 0 2px 2px #0c0c0c, inset 1px 0 1px #151515, inset -1px 0 1px #151515; }
.caret { position: absolute; top: 11px; right: 7px; border: 5px solid transparent; border-top: 0; border-bottom: 10px solid #f2f2f2; }

.actions { flex: none; display: flex; justify-content: flex-end; gap: 20px; padding: 21px 47px 12px 0; }
.callout { display: flex; outline: 8px solid #ec1c24; outline-offset: 5px; }
.btn { height: 47px; padding: 0 17px; border: 0; border-radius: 3px; background: #e4e7eb; color: #45484b; font-size: 19px; }
.primary { background: #0071c5; color: #fff; padding: 0 16px; }

/* Page behind the dialog */
.underlay { flex: none; height: 11px; overflow: hidden; padding-right: 55px; border-bottom: 3px solid #f0f0f0; background: #717171; color: #333; text-align: right; font-size: 16px; line-height: 20px; }
```
